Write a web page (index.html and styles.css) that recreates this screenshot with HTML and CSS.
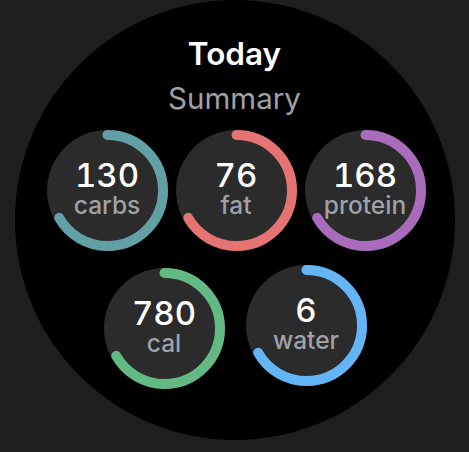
FILE: index.html
```html
<!DOCTYPE html>
<html lang="en">

<head>
    <meta charset="UTF-8">
    <meta name="viewport" content="width=device-width, initial-scale=1.0">
    <title>today summary</title>
    <link rel="stylesheet" href="styles.css">
</head>

<body>
    <div class="watch">
        <h1 class="title">Today</h1>
        <p class="subtitle">Summary</p>

        <div class="row row-top">
            <div class="ring">
                <svg class="arc" viewBox="0 0 121 121">
                    <circle cx="60.5" cy="60.5" r="55.5" stroke="#62a0a6" transform="rotate(-90 60.5 60.5)" />
                </svg>
                <span class="value">130</span>
                <span class="label">carbs</span>
            </div>
            <div class="ring">
                <svg class="arc" viewBox="0 0 121 121">
                    <circle cx="60.5" cy="60.5" r="55.5" stroke="#e57373" transform="rotate(-90 60.5 60.5)" />
                </svg>
                <span class="value">76</span>
                <span class="label">fat</span>
            </div>
            <div class="ring">
                <svg class="arc" viewBox="0 0 121 121">
                    <circle cx="60.5" cy="60.5" r="55.5" stroke="#a96cbd" transform="rotate(-90 60.5 60.5)" />
                </svg>
                <span class="value">168</span>
                <span class="label">protein</span>
            </div>
        </div>

        <div class="row row-bottom">
            <div class="ring ring-low">
                <svg class="arc" viewBox="0 0 121 121">
                    <circle cx="60.5" cy="60.5" r="55.5" stroke="#63b983" transform="rotate(-90 60.5 60.5)" />
                </svg>
                <span class="value">780</span>
                <span class="label">cal</span>
            </div>
            <div class="ring">
                <svg class="arc" viewBox="0 0 121 121">
                    <circle cx="60.5" cy="60.5" r="55.5" stroke="#64b5f6" transform="rotate(-90 60.5 60.5)" />
                </svg>
                <span class="value">6</span>
                <span class="label">water</span>
            </div>
        </div>
    </div>
</body>

</html>
```

FILE: styles.css
```css
body {
    margin: 0;
    height: 452px;
    background-color: #1e1e1e;
    font-family: Inter, Roboto, sans-serif;
}

.watch {
    width: 440px;
    height: 440px;
    margin: 0 auto;
    padding-top: 35px;
    box-sizing: border-box;
    border-radius: 50%;
    background-color: #000;
    display: flex;
    flex-direction: column;
    align-items: center;
}

.title {
    margin: 0;
    font-size: 31.5px;
    line-height: 38px;
    font-weight: 600;
    color: #fff;
}

.subtitle {
    margin: 7px 0 0;
    font-size: 29.5px;
    line-height: 36px;
    color: #9ea2a7;
}

.row {
    display: flex;
    align-items: flex-start;
}

.row-top {
    gap: 8px;
    margin-top: 14px;
    margin-left: 3px;
}

.row-bottom {
    gap: 21px;
    margin-top: 14px;
    margin-left: 1px;
}

.ring {
    position: relative;
    width: 121px;
    height: 121px;
    padding-bottom: 6px;
    box-sizing: border-box;
    border-radius: 50%;
    background-color: #2b2b2b;
    display: flex;
    flex-direction: column;
    align-items: center;
    justify-content: center;
}

.ring-low {
    margin-top: 3px;
}

.arc {
    position: absolute;
    top: 0;
    left: 0;
    width: 121px;
    height: 121px;
}

.arc circle {
    fill: none;
    stroke-width: 10;
    stroke-linecap: round;
    stroke-dasharray: 232.5 400;
}

.value {
    font-size: 33px;
    line-height: 32px;
    font-weight: 500;
    font-variant-numeric: tabular-nums;
    color: #fff;
}

.label {
    margin-top: 2px;
    font-size: 24.5px;
    line-height: 24px;
    font-weight: 500;
    color: #9ea2a7;
}
```
